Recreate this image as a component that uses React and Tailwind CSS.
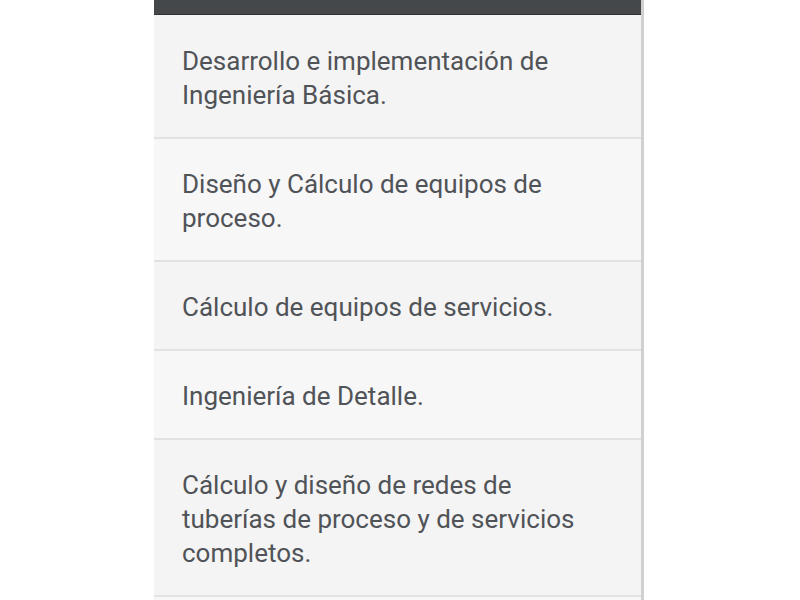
const items = [
  { text: 'Desarrollo e implementación de Ingeniería Básica.', bg: 'bg-[#f4f4f4]' },
  { text: 'Diseño y Cálculo de equipos de proceso.', bg: 'bg-[#f7f7f7]' },
  { text: 'Cálculo de equipos de servicios.', bg: 'bg-[#f4f4f4]' },
  { text: 'Ingeniería de Detalle.', bg: 'bg-[#f7f7f7]' },
  { text: 'Cálculo y diseño de redes de tuberías de proceso y de servicios completos.', bg: 'bg-[#f4f4f4]' },
]

export default function App() {
  return (
    <div className="w-[800px] h-[600px] overflow-hidden bg-white flex" style={{ fontFamily: 'Roboto, "Noto Sans", sans-serif' }}>
      <div className="ml-[154px] w-[490px] h-full border-r-[3px] border-[#d0d0d0] flex flex-col">
        <div className="h-[15px] shrink-0 bg-[#45484b] border-b border-[#2e3032]" />
        {items.map((item, i) => (
          <div
            key={i}
            className={`${item.bg} border-b-[2px] border-[#e2e2e2] pl-[28px] pr-[60px] ${i === 0 ? 'pt-[29px]' : 'pt-[28px]'} pb-[25px] text-[26px] leading-[34px] text-[#505357]`}
          >
            {item.text}
          </div>
        ))}
        <div className="flex-1 bg-[#f7f7f7]" />
      </div>
    </div>
  )
}
